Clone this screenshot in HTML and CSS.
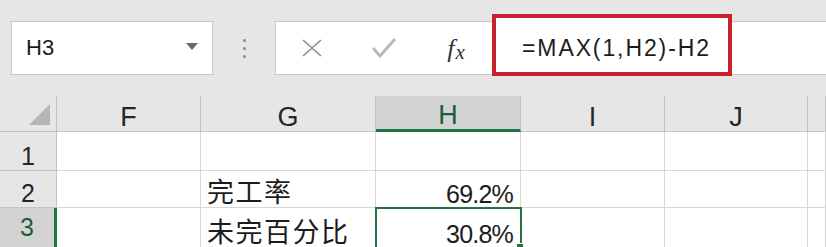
FILE: index.html
```html
<!DOCTYPE html>
<html lang="zh-CN">
  <head>
    <meta charset="UTF-8" />
    <title>Sheet</title>
    <link rel="stylesheet" href="styles.css">
  </head>
  <body>
    <div class="toolbar">
      <div class="namebox">
        <span>H3</span>
        <svg class="caret" width="12" height="7" viewBox="0 0 12 7"><path d="M0 0H12L6 7Z" fill="#6a6a6a"/></svg>
      </div>
      <div class="grip"><i></i><i></i><i></i></div>
      <div class="formula">
        <span class="tool">
          <svg width="22" height="18" viewBox="0 0 22 18"><path d="M2 1L20 17M20 1L2 17" stroke="#8c8c8c" stroke-width="1.6" fill="none"/></svg>
        </span>
        <span class="tool">
          <svg width="26" height="22" viewBox="0 0 26 22"><path d="M2 11L9 19L24 2" stroke="#b9b9b9" stroke-width="3" fill="none"/></svg>
        </span>
        <span class="tool fx">f<span class="fx-x">x</span></span>
        <div class="formula-text">=MAX(1,H2)-H2</div>
      </div>
    </div>

    <div class="sheet">
      <div class="head corner">
        <svg width="21" height="21" viewBox="0 0 21 21"><path d="M21 0V21H0Z" fill="#b5b5b5"/></svg>
      </div>
      <div class="head col">F</div>
      <div class="head col">G</div>
      <div class="head col sel-col">H</div>
      <div class="head col">I</div>
      <div class="head col">J</div>
      <div class="head col"></div>

      <div class="head row">1</div>
      <div class="cell"></div>
      <div class="cell"></div>
      <div class="cell"></div>
      <div class="cell"></div>
      <div class="cell"></div>
      <div class="cell"></div>

      <div class="head row">2</div>
      <div class="cell"></div>
      <div class="cell text">完工率</div>
      <div class="cell num">69.2%</div>
      <div class="cell"></div>
      <div class="cell"></div>
      <div class="cell"></div>

      <div class="head row sel-row">3</div>
      <div class="cell"></div>
      <div class="cell text">未完百分比</div>
      <div class="cell num active">30.8%</div>
      <div class="cell"></div>
      <div class="cell"></div>
      <div class="cell"></div>
    </div>
  </body>
</html>
```

FILE: styles.css
```css
body {
  margin: 0;
  width: 826px;
  height: 247px;
  overflow: hidden;
  background: #e6e6e6;
  font-family: "Liberation Sans", "Noto Sans CJK SC", sans-serif;
  color: #1c1c1c;
}

.toolbar {
  box-sizing: border-box;
  height: 96px;
  padding-top: 21px;
  display: flex;
  align-items: flex-start;
}

.namebox {
  box-sizing: border-box;
  margin-left: 11px;
  width: 202px;
  height: 54px;
  padding: 0 14px;
  background: #fff;
  border: 1px solid #c6c6c6;
  display: flex;
  align-items: center;
  justify-content: space-between;
  font-size: 22px;
  line-height: 1;
}

.caret {
  margin-top: -4px;
}

.grip {
  width: 62px;
  height: 54px;
  display: flex;
  flex-direction: column;
  align-items: center;
  justify-content: center;
  gap: 5px;
}

.grip i {
  width: 3px;
  height: 3px;
  border-radius: 50%;
  background: #8a8a8a;
}

.formula {
  flex: 1;
  box-sizing: border-box;
  height: 54px;
  background: #fff;
  border: 1px solid #c8c8c8;
  border-right: none;
  display: flex;
  align-items: flex-start;
}

.tool {
  width: 72px;
  height: 52px;
  display: flex;
  align-items: center;
  justify-content: center;
}

.fx {
  font-family: "Liberation Serif", serif;
  font-style: italic;
  font-size: 26px;
  line-height: 1;
  color: #333;
  align-items: baseline;
  padding-top: 14px;
  box-sizing: border-box;
}

.fx-x {
  font-size: 21px;
  position: relative;
  top: 2px;
  margin-left: 1px;
}

.formula-text {
  box-sizing: border-box;
  margin-top: -8px;
  width: 240px;
  height: 62px;
  border: 4px solid #c5222b;
  padding: 6px 0 0 26px;
  display: flex;
  align-items: center;
  font-size: 23px;
  line-height: 1;
  letter-spacing: 1.9px;
  background: #fff;
}

.sheet {
  display: grid;
  grid-template-columns: 57px 144px 175px 145px 144px 143px 18px;
  grid-template-rows: 36px 39px 37px 40px;
  background: #fff;
}

.head {
  box-sizing: border-box;
  background: #e6e6e6;
  border-right: 1px solid #c3c3c3;
  border-bottom: 1px solid #c3c3c3;
  display: flex;
  justify-content: center;
  align-items: flex-end;
  line-height: 1;
  color: #262626;
}

.corner {
  align-items: center;
  justify-content: flex-end;
  padding-right: 6px;
  padding-top: 2px;
}

.col {
  font-size: 27px;
}

.row {
  font-size: 25px;
  padding-bottom: 1px;
}

.sel-col {
  background: #d3d3d3;
  color: #1e5d3b;
  border-bottom: 3px solid #217346;
}

.sel-row {
  background: #d3d3d3;
  color: #1e5d3b;
  border-right: 3px solid #217346;
  padding-bottom: 7px;
}

.cell {
  box-sizing: border-box;
  border-right: 1px solid #d6d6d6;
  border-bottom: 1px solid #d6d6d6;
  display: flex;
  align-items: flex-end;
  line-height: 1;
  color: #1c1c1c;
}

.text {
  font-size: 27px;
  padding-left: 6px;
  letter-spacing: 1.5px;
}

.num {
  font-size: 25px;
  justify-content: flex-end;
  padding-right: 7px;
  letter-spacing: -0.8px;
}

.active {
  position: relative;
  outline: 2px solid #217346;
  outline-offset: -1px;
}

.active::after {
  content: "";
  position: absolute;
  right: -4px;
  bottom: -4px;
  width: 6px;
  height: 6px;
  background: #217346;
  border: 1px solid #fff;
}
```
